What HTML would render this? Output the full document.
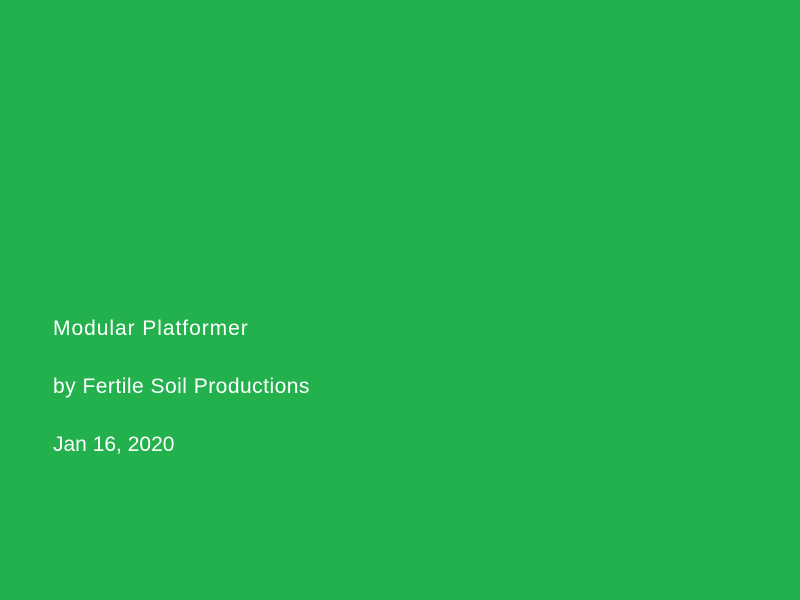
<!DOCTYPE html>
<html><head><style>
html,body{margin:0;padding:0;width:800px;height:600px;background:#22b14c;overflow:hidden}
div{position:absolute;left:53px;color:#fff;font-family:"Liberation Sans",sans-serif;font-size:21px;line-height:24px;white-space:nowrap}
</style></head><body>
<div style="top:317px;letter-spacing:0.95px">Modular Platformer</div>
<div style="top:375px;letter-spacing:0.48px">by Fertile Soil Productions</div>
<div style="top:433px;letter-spacing:0px">Jan 16, 2020</div>
</body></html>
